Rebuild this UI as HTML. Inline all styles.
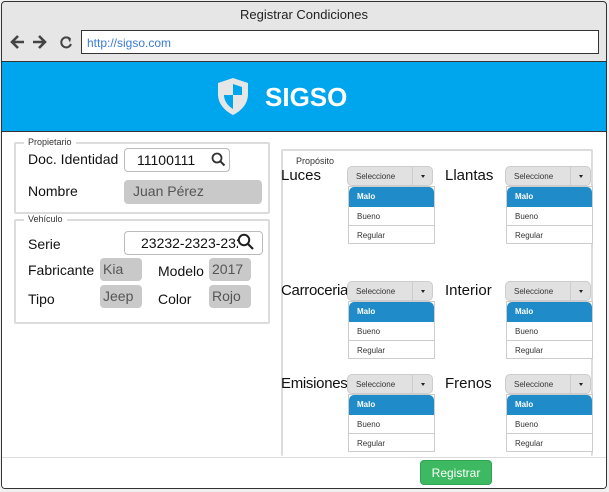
<!DOCTYPE html>
<html><head><meta charset="utf-8"><style>
*{box-sizing:border-box;margin:0;padding:0}
body{width:609px;height:492px;background:#f0f0f0;font-family:"Liberation Sans",sans-serif;position:relative;overflow:hidden}
.a{position:absolute}
.win{left:1px;top:1px;width:606px;height:488px;border:1px solid #333;border-radius:4px;background:#e6e6e6;overflow:hidden}
.fs{position:absolute;border:2px solid #dcdcdc;border-radius:2px}
.lg{position:absolute;background:#fff;font-size:9px;color:#333;padding:0 4px;top:-7px;left:8px}
.lb{position:absolute;font-size:14px;color:#111}
.box{position:absolute;border:1px solid #bbb;border-radius:4px;background:#fff;font-size:14px;color:#111}
.gr{position:absolute;background:#c9c9c9;border-radius:4px;font-size:14px;color:#555;padding:3px 3px}
.sel{position:absolute;width:86px;height:20px;background:#e1e1e1;border:1px solid #ccc;border-radius:5px;font-size:8px;color:#333}
.sel span{position:absolute;left:8px;top:5px}
.sel i{position:absolute;left:64px;top:0;height:18px;border-left:1px solid #ccc;width:21px}
.sel i:after{content:"";position:absolute;left:8px;top:8px;border:2.5px solid transparent;border-top:3px solid #222}
.lst{position:absolute;width:87px;height:58px;border:1px solid #ccc;background:#fff;font-size:8px;color:#333}
.lst div{height:19px;padding:5px 0 0 8px;border-bottom:1px solid #ccc}
.lst div:first-child{background:#1f8bc8;color:#fff;font-weight:bold;border-radius:5px 5px 0 0;height:20px;border:none}
.lst div:last-child{border:none}
.big{position:absolute;font-size:15px;color:#111}
</style></head><body>
<div class="a win">
 <div class="a" style="left:0;top:5px;width:604px;text-align:center;font-size:13px;color:#222">Registrar Condiciones</div>
 <svg class="a" style="left:7px;top:31px" width="68" height="18" viewBox="0 0 68 18">
  <path d="M15 9H4M9 3L3 9l6 6" stroke="#444" stroke-width="2.6" fill="none"/>
  <path d="M24 9h11M30 3l6 6-6 6" stroke="#444" stroke-width="2.6" fill="none"/>
  <path d="M61 6a5 5 0 1 0 1 5" stroke="#444" stroke-width="2" fill="none"/><path d="M58 4l4 1.5-1 4z" fill="#444"/>
 </svg>
 <div class="a" style="left:79px;top:28px;width:518px;height:24px;background:#fff;border:1px solid #333;font-size:12px;color:#3a7bd5;padding:5px 5px">http://sigso.com</div>
 <div class="a" style="left:0;top:59px;width:606px;height:71px;background:#00a6ed;border-top:1px solid #333;border-bottom:1px solid #333"></div>
 <svg class="a" style="left:214px;top:75px" width="34" height="39" viewBox="0 0 34 39">
  <path d="M17 1L2 6v11c0 10 7 17 15 21 8-4 15-11 15-21V6z" fill="#e6e6e6"/>
  <path d="M17 7l9 3v8h-9zM17 18H8c0 6 4 11 9 14z" fill="#00a6ed"/>
 </svg>
 <div class="a" style="left:263px;top:80px;font-size:26px;font-weight:bold;color:#fff">SIGSO</div>
 <div class="a" style="left:0;top:130px;width:606px;height:325px;background:#fff"></div>
 <div class="a" style="left:0;top:455px;width:606px;height:33px;background:#fff;border-top:1px solid #ddd"></div>
</div>

<div class="fs" style="left:14px;top:142px;width:256px;height:72px"><div class="lg">Propietario</div></div>
<div class="lb" style="left:28px;top:151px">Doc. Identidad</div>
<div class="box" style="left:124px;top:148px;width:106px;height:24px;padding:3px 12px">11100111</div>
<svg class="a" style="left:211px;top:152px" width="15" height="15"><circle cx="6" cy="6" r="4.5" stroke="#333" stroke-width="1.8" fill="none"/><path d="M9.5 9.5l4 4" stroke="#333" stroke-width="2"/></svg>
<div class="lb" style="left:28px;top:183px">Nombre</div>
<div class="gr" style="left:124px;top:180px;width:138px;height:24px;padding:3px 9px">Juan Pérez</div>

<div class="fs" style="left:14px;top:219px;width:256px;height:105px"><div class="lg">Vehículo</div></div>
<div class="lb" style="left:28px;top:236px">Serie</div>
<div class="box" style="left:124px;top:231px;width:139px;height:24px;padding:3px 0 0 16px;overflow:hidden;white-space:nowrap"><span style="display:inline-block;width:97px;overflow:hidden">23232-2323-2323</span></div>
<svg class="a" style="left:237px;top:233px" width="18" height="18"><circle cx="7" cy="7" r="5.2" stroke="#222" stroke-width="2" fill="none"/><path d="M11 11l5 5" stroke="#222" stroke-width="2.2"/></svg>
<div class="lb" style="left:28px;top:262px">Fabricante</div>
<div class="gr" style="left:100px;top:258px;width:42px;height:23px">Kia</div>
<div class="lb" style="left:158px;top:263px">Modelo</div>
<div class="gr" style="left:209px;top:258px;width:42px;height:23px">2017</div>
<div class="lb" style="left:28px;top:291px">Tipo</div>
<div class="gr" style="left:100px;top:285px;width:42px;height:23px">Jeep</div>
<div class="lb" style="left:158px;top:291px">Color</div>
<div class="gr" style="left:209px;top:285px;width:42px;height:23px">Rojo</div>

<div class="fs" style="left:281px;top:149px;width:312px;height:307px;border-bottom:none"><div class="lg" style="top:5px;left:9px">Propósito</div></div>

<div class="big" style="left:281px;top:167px">Luces</div>
<div class="sel" style="left:347px;top:166px"><span>Seleccione</span><i></i></div>
<div class="lst" style="left:348px;top:186px"><div>Malo</div><div>Bueno</div><div>Regular</div></div>
<div class="big" style="left:445px;top:167px">Llantas</div>
<div class="sel" style="left:505px;top:166px"><span>Seleccione</span><i></i></div>
<div class="lst" style="left:506px;top:186px"><div>Malo</div><div>Bueno</div><div>Regular</div></div>

<div class="big" style="left:281px;top:282px;letter-spacing:-0.3px">Carroceria</div>
<div class="sel" style="left:347px;top:281px"><span>Seleccione</span><i></i></div>
<div class="lst" style="left:348px;top:301px"><div>Malo</div><div>Bueno</div><div>Regular</div></div>
<div class="big" style="left:445px;top:282px">Interior</div>
<div class="sel" style="left:505px;top:281px"><span>Seleccione</span><i></i></div>
<div class="lst" style="left:506px;top:301px"><div>Malo</div><div>Bueno</div><div>Regular</div></div>

<div class="big" style="left:281px;top:375px;letter-spacing:-0.3px">Emisiones</div>
<div class="sel" style="left:347px;top:374px"><span>Seleccione</span><i></i></div>
<div class="lst" style="left:348px;top:394px"><div>Malo</div><div>Bueno</div><div>Regular</div></div>
<div class="big" style="left:445px;top:375px">Frenos</div>
<div class="sel" style="left:505px;top:374px"><span>Seleccione</span><i></i></div>
<div class="lst" style="left:506px;top:394px"><div>Malo</div><div>Bueno</div><div>Regular</div></div>

<div class="a" style="left:420px;top:460px;width:72px;height:25px;background:#3dba61;border:1px solid #2fa452;border-radius:4px;color:#fff;font-size:12px;text-align:center;padding-top:5px">Registrar</div>
</body></html>
